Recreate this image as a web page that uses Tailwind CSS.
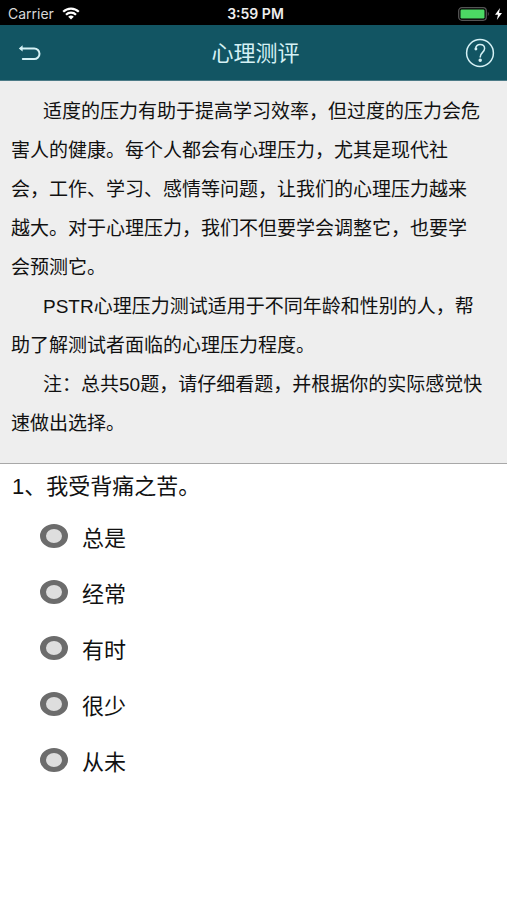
<!DOCTYPE html>
<html lang="zh-CN">

<head>
  <meta charset="UTF-8">
  <meta name="viewport" content="width=device-width, initial-scale=1.0">
  <title>心理测评</title>
  <script src="https://cdn.jsdelivr.net/npm/@tailwindcss/browser@4"></script>
</head>

<body class="bg-white text-[#111] min-h-screen font-['Liberation_Sans','Noto_Sans_CJK_SC',sans-serif]">

  <!-- status bar -->
  <div class="h-[25px] bg-black grid grid-cols-3 items-center pl-2 pr-1 pt-[2px] text-sm font-['Inter',sans-serif]">
    <div class="flex items-center gap-2 text-[#d8d8d8]">
      <span>Carrier</span>
      <svg class="w-[18px] h-[13px]" viewBox="0 0 18 13" fill="none" stroke="#fff" stroke-width="2.2">
        <path d="M1.2 4.8a11 11 0 0 1 15.6 0" />
        <path d="M4 7.8a7 7 0 0 1 10 0" />
        <path d="M9 12.6L6.2 9.8a4 4 0 0 1 5.6 0z" fill="#fff" stroke="none" />
      </svg>
    </div>
    <span class="text-center font-semibold text-[#eee]">3:59 PM</span>
    <div class="flex items-center justify-end gap-1">
      <svg class="w-8 h-[14px]" viewBox="0 0 32 14">
        <rect x="0.7" y="0.7" width="27.6" height="12.6" rx="3.2" fill="none" stroke="#555" stroke-width="1.3" />
        <rect x="2.5" y="2.5" width="24" height="9" rx="1.2" fill="#4cd964" />
        <path d="M29.8 4.8q2 2.2 0 4.4z" fill="#555" />
      </svg>
      <svg class="w-[9px] h-3" viewBox="0 0 9 12" fill="#fff">
        <path d="M6 0L1 6.8h3L2.8 12 8 5H5z" />
      </svg>
    </div>
  </div>

  <!-- header -->
  <header class="h-14 pt-px bg-[#125563] border-b border-[#4c7b87] flex items-center justify-between pl-[18px] pr-3">
    <button type="button" aria-label="返回" class="w-7 h-8 flex items-center">
      <svg class="w-[23px] h-4" viewBox="0 0 23 16" fill="none" stroke="#d5f1f5" stroke-width="2" stroke-linecap="round">
        <path d="M3 3.4h13.2a5 5 0 0 1 0 10.6H4.8" />
        <path d="M0.8 3.4l3.8-3.2v6.4z" fill="#d5f1f5" stroke="none" />
      </svg>
    </button>
    <h1 class="text-[22px] text-[#d5f1f5]">心理测评</h1>
    <button type="button" aria-label="帮助" class="w-[30px] h-[30px]">
      <svg class="w-[30px] h-[30px]" viewBox="0 0 30 30" fill="none" stroke="#d5f1f5" stroke-width="1.5">
        <circle cx="15" cy="15" r="13.4" />
        <path d="M10.7 10.8C10.7 8 12.5 6.6 15.1 6.6s4.5 1.5 4.5 4c0 3.8-4.4 3.8-4.4 8.4" stroke-linecap="round" />
        <circle cx="10.9" cy="11" r="0.7" fill="#d5f1f5" />
        <circle cx="15.2" cy="22.3" r="1" fill="#d5f1f5" />
      </svg>
    </button>
  </header>

  <main>
    <section class="bg-[#eee] border-b border-[#a8a8a8] pl-[11px] pt-[11px] pb-5 text-[19px] leading-[39px]">
      <p class="indent-8">适度的压力有助于提高学习效率，但过度的压力会危<br>害人的健康。每个人都会有心理压力，尤其是现代社<br>会，工作、学习、感情等问题，让我们的心理压力越来<br>越大。对于心理压力，我们不但要学会调整它，也要学<br>会预测它。</p>
      <p class="indent-8">PSTR心理压力测试适用于不同年龄和性别的人，帮<br>助了解测试者面临的心理压力程度。</p>
      <p class="indent-8">注：总共50题，请仔细看题，并根据你的实际感觉快<br>速做出选择。</p>
    </section>

    <fieldset class="text-[22px]">
      <legend class="pl-3 leading-[46px]">1、我受背痛之苦。</legend>
      <label class="flex items-center gap-[14px] h-14 pl-10">
        <input type="radio" name="q1" class="appearance-none w-7 h-6 mb-1 rounded-[50%] border-x-6 border-y-5 border-[#6c6c6c] bg-[#dedede] checked:bg-[#125563]">
        <span>总是</span>
      </label>
      <label class="flex items-center gap-[14px] h-14 pl-10">
        <input type="radio" name="q1" class="appearance-none w-7 h-6 mb-1 rounded-[50%] border-x-6 border-y-5 border-[#6c6c6c] bg-[#dedede] checked:bg-[#125563]">
        <span>经常</span>
      </label>
      <label class="flex items-center gap-[14px] h-14 pl-10">
        <input type="radio" name="q1" class="appearance-none w-7 h-6 mb-1 rounded-[50%] border-x-6 border-y-5 border-[#6c6c6c] bg-[#dedede] checked:bg-[#125563]">
        <span>有时</span>
      </label>
      <label class="flex items-center gap-[14px] h-14 pl-10">
        <input type="radio" name="q1" class="appearance-none w-7 h-6 mb-1 rounded-[50%] border-x-6 border-y-5 border-[#6c6c6c] bg-[#dedede] checked:bg-[#125563]">
        <span>很少</span>
      </label>
      <label class="flex items-center gap-[14px] h-14 pl-10">
        <input type="radio" name="q1" class="appearance-none w-7 h-6 mb-1 rounded-[50%] border-x-6 border-y-5 border-[#6c6c6c] bg-[#dedede] checked:bg-[#125563]">
        <span>从未</span>
      </label>
    </fieldset>
  </main>

</body>

</html>
